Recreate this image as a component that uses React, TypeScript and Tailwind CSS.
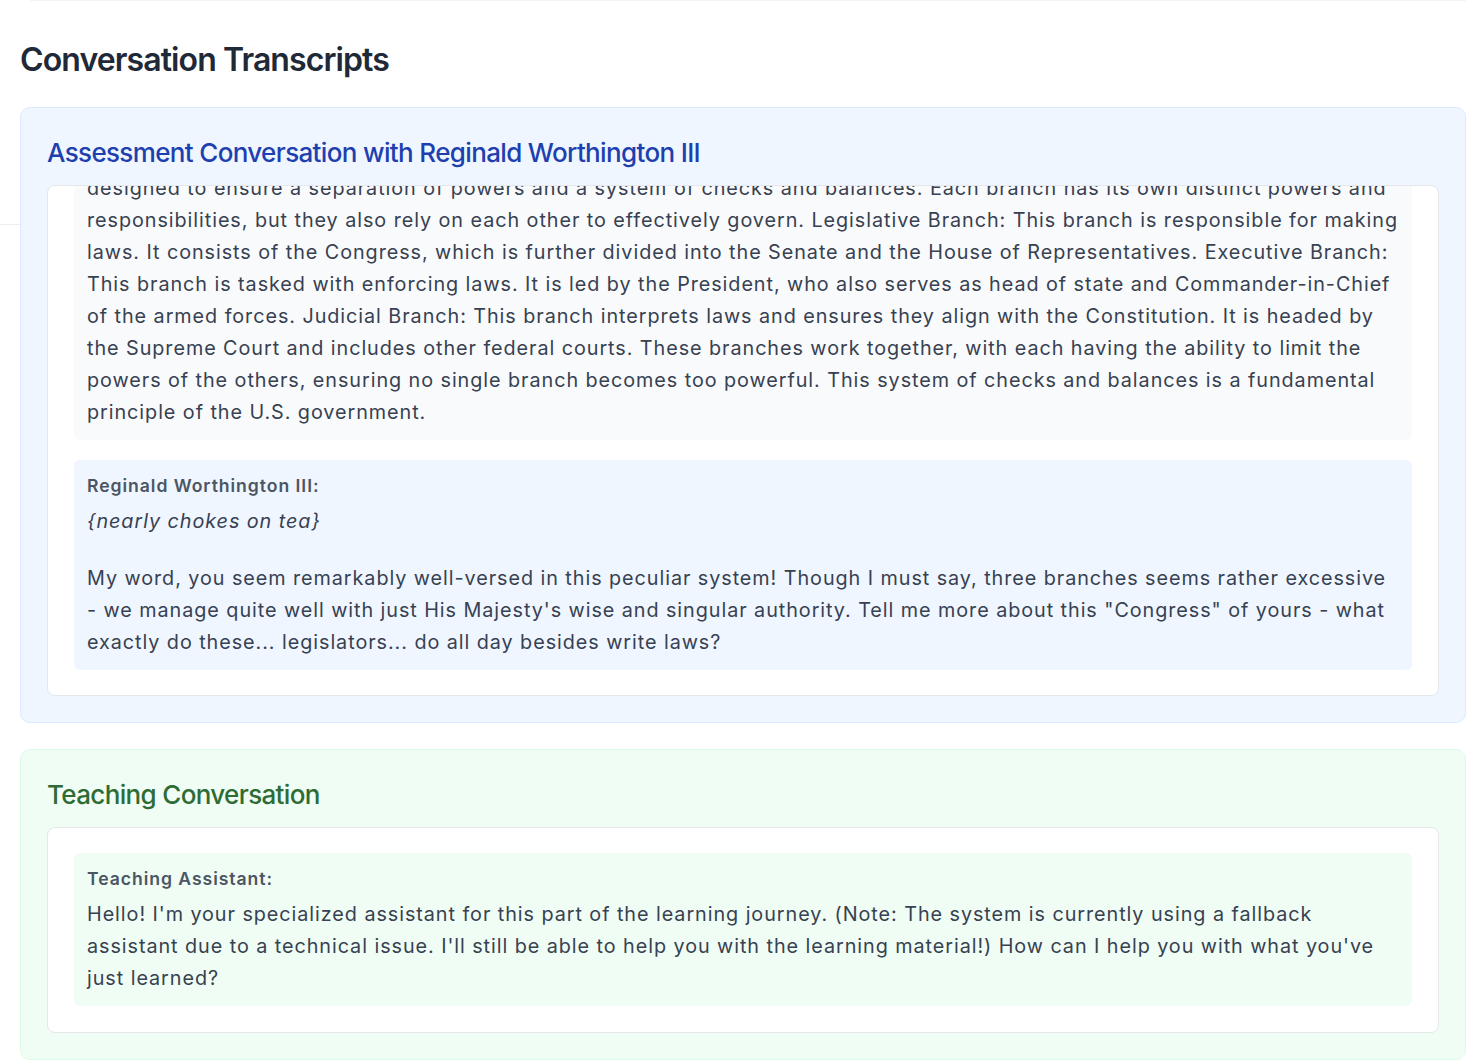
import { useLayoutEffect, useRef } from 'react';

type Message = {
  id: number;
  speaker: string;
  tone: 'user' | 'character' | 'assistant';
  body: React.ReactNode;
};

const assessmentMessages: Message[] = [
  {
    id: 1,
    speaker: 'Reginald Worthington III:',
    tone: 'character',
    body: (
      <>
        <p className="italic">{'{adjusts monocle}'}</p>
        <p className="mt-[25px]">
          Good day to you! I say, I've heard the most curious rumours about how your colonies are governed. Pray tell,
          how exactly is this government of yours arranged?
        </p>
      </>
    ),
  },
  {
    id: 2,
    speaker: 'You:',
    tone: 'user',
    body: (
      <p>
        The U.S. government is divided into three branches: the Legislative, the Executive, and the Judicial. This structure is
        <br />
        designed to ensure a separation of powers and a system of checks and balances. Each branch has its own distinct powers and
        responsibilities, but they also rely on each other to effectively govern. Legislative Branch: This branch is responsible
        for making laws. It consists of the Congress, which is further divided into the Senate and the House of
        Representatives. Executive Branch: This branch is tasked with enforcing laws. It is led by the President, who also
        serves as head of state and Commander-in-Chief of the armed forces. Judicial Branch: This branch interprets laws and
        ensures they align with the Constitution. It is headed by the Supreme Court and includes other federal courts. These
        branches work together, with each having the ability to limit the powers of the others, ensuring no single branch
        becomes too powerful. This system of checks and balances is a fundamental principle of the U.S. government.
      </p>
    ),
  },
  {
    id: 3,
    speaker: 'Reginald Worthington III:',
    tone: 'character',
    body: (
      <>
        <p className="italic">{'{nearly chokes on tea}'}</p>
        <p className="mt-[25px]">
          My word, you seem remarkably well-versed in this peculiar system! Though I must say, three branches seems rather
          excessive - we manage quite well with just His Majesty's wise and singular authority. Tell me more about this
          "Congress" of yours - what exactly do these... legislators... do all day besides write laws?
        </p>
      </>
    ),
  },
];

const teachingMessages: Message[] = [
  {
    id: 1,
    speaker: 'Teaching Assistant:',
    tone: 'assistant',
    body: (
      <p>
        Hello! I'm your specialized assistant for this part of the learning journey. (Note: The system is currently using a
        fallback assistant due to a technical issue. I'll still be able to help you with the learning material!) How can I
        help you with what you've just learned?
      </p>
    ),
  },
];

const toneBg = {
  user: 'bg-[#f9fafb]',
  character: 'bg-[#eff6ff]',
  assistant: 'bg-[#f0fdf4]',
};

function Bubble({ message }: { message: Message }) {
  return (
    <div className={`rounded-md px-[13px] py-[12px] ${toneBg[message.tone]}`}>
      <div className="mb-[5px] text-[17.6px] leading-[28px] font-semibold tracking-[0.95px] text-[#4b5563]">
        {message.speaker}
      </div>
      <div className="text-[19.8px] leading-[32px] tracking-[0.94px] text-[#374151]">{message.body}</div>
    </div>
  );
}

function Transcript({
  title,
  messages,
  variant,
  scrollable,
}: {
  title: string;
  messages: Message[];
  variant: 'blue' | 'green';
  scrollable?: boolean;
}) {
  const boxRef = useRef<HTMLDivElement>(null);

  useLayoutEffect(() => {
    // keep the newest message in view
    if (scrollable && boxRef.current) {
      boxRef.current.scrollTop = boxRef.current.scrollHeight;
    }
  }, [scrollable]);

  const shell =
    variant === 'blue' ? 'bg-[#eff6ff] border-[#dbeafe]' : 'bg-[#f0fdf4] border-[#dcfce7]';
  const heading = variant === 'blue' ? 'text-[#1e40af]' : 'text-[#2e6b35]';

  return (
    <section className={`rounded-[10px] border px-[26px] pt-[29px] pb-[26px] ${shell}`}>
      <h3 className={`mb-[16px] text-[26px] leading-[32px] font-medium tracking-[-0.65px] ${heading}`}>{title}</h3>
      <div
        ref={boxRef}
        className={`rounded-lg border border-[#e5e7eb] bg-white ${
          scrollable ? 'h-[511px] overflow-y-auto [scrollbar-width:none]' : ''
        }`}
      >
        <div
          className={`flex flex-col gap-[20px] px-[26px] pt-[25px] ${scrollable ? 'pb-[25px]' : 'pb-[26px]'}`}
        >
          {messages.map((m) => (
            <Bubble key={m.id} message={m} />
          ))}
        </div>
      </div>
    </section>
  );
}

export default function App() {
  return (
    <div className="min-h-screen bg-white font-['Inter','Noto_Sans',sans-serif]">
      <div className="ml-[30px] h-px bg-[#f4f4f5]" />
      <div className="relative pl-[20px]">
        {/* edge of the panel behind the transcripts */}
        <div className="absolute left-0 top-[184px] h-px w-[20px] bg-[#eceef1]" />
        <h2 className="mt-[39px] mb-[27px] text-[32px] leading-[40px] font-semibold tracking-[-0.9px] text-[#1f2937]">
          Conversation Transcripts
        </h2>
        <div className="relative flex flex-col gap-[26px] pb-px">
          <Transcript
            title="Assessment Conversation with Reginald Worthington III"
            messages={assessmentMessages}
            variant="blue"
            scrollable
          />
          <Transcript title="Teaching Conversation" messages={teachingMessages} variant="green" />
        </div>
      </div>
    </div>
  );
}
